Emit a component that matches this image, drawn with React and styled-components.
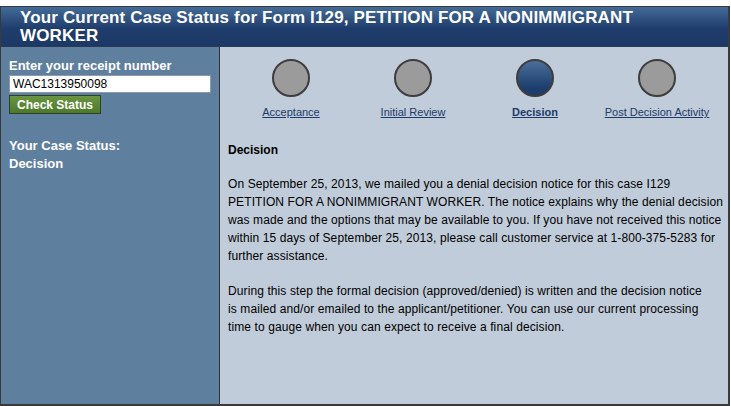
import React from 'react';
import styled, { createGlobalStyle } from 'styled-components';

const GlobalStyle = createGlobalStyle`
  body {
    margin: 0;
    background: #fff;
    font-family: "Liberation Sans", Arial, sans-serif;
  }
`;

const Frame = styled.div`
  margin-top: 6px;
  width: 730px;
  height: 400px;
  box-sizing: border-box;
  border: 1px solid #3a3a3a;
  border-right-width: 2px;
  border-bottom-width: 2px;
  display: flex;
  flex-direction: column;
`;

const Header = styled.h1`
  margin: 0;
  height: 40px;
  box-sizing: border-box;
  padding: 2px 50px 0 19px;
  background: linear-gradient(#436b97, #1f3d6c 55%, #1c3866);
  color: #fff;
  font-size: 17px;
  line-height: 18px;
  font-weight: bold;
  letter-spacing: 0.15px;
  border-bottom: 1px solid #2a3a55;
`;

const Body = styled.div`
  flex: 1;
  display: flex;
`;

const Sidebar = styled.div`
  width: 219px;
  background: #5f7f9e;
  border-right: 1px solid #333;
  padding: 11px 0 0 8px;
  box-sizing: border-box;
  color: #fff;
  font-weight: bold;
  font-size: 13px;
`;

const Label = styled.div`
  line-height: 16px;
`;

const ReceiptInput = styled.input`
  display: block;
  width: 202px;
  height: 18px;
  box-sizing: border-box;
  margin-top: 1px;
  border: 1px solid #8a9bb0;
  padding: 0 3px;
  font-family: "Liberation Sans", Arial, sans-serif;
  font-size: 12px;
  color: #000;
  outline: none;
`;

const CheckButton = styled.button`
  display: block;
  margin-top: 2px;
  height: 19px;
  width: 92px;
  padding: 0;
  box-sizing: border-box;
  border: 1px solid #2f3f2a;
  background: linear-gradient(#6a9440, #4c7a2b);
  color: #fff;
  font-family: "Liberation Sans", Arial, sans-serif;
  font-weight: bold;
  font-size: 12px;
  cursor: pointer;
`;

const StatusText = styled.div`
  margin-top: 23px;
  line-height: 18px;
`;

const Main = styled.div`
  flex: 1;
  background: #c0ccd9;
  padding: 0 4px 0 8px;
  font-size: 12px;
  color: #000;
`;

const Steps = styled.div`
  display: grid;
  grid-template-columns: repeat(4, 122px);
  padding: 12px 0 0 2px;
`;

const Step = styled.div`
  display: flex;
  flex-direction: column;
  align-items: center;
`;

const Dot = styled.div`
  width: 38px;
  height: 38px;
  box-sizing: border-box;
  border-radius: 50%;
  border: 2px solid #3d3d3d;
  background: ${(p) =>
    p.$active ? 'linear-gradient(#4a6e99, #1d3d6d 80%)' : '#9b9b9b'};
`;

const StepLink = styled.a`
  margin-top: 9px;
  font-size: 11px;
  color: #1d3b6a;
  text-decoration: underline;
  font-weight: ${(p) => (p.$active ? 'bold' : 'normal')};
`;

const Heading = styled.div`
  font-weight: bold;
  margin-top: 24px;
  line-height: 16px;
`;

const Para = styled.p`
  margin: 17px 0 0;
  line-height: 18px;
  letter-spacing: 0.1px;
  white-space: nowrap;
`;

const steps = ['Acceptance', 'Initial Review', 'Decision', 'Post Decision Activity'];

export default function App() {
  return (
    <>
      <GlobalStyle />
      <Frame>
        <Header>
          Your Current Case Status for Form I129, PETITION FOR A NONIMMIGRANT WORKER
        </Header>
        <Body>
          <Sidebar>
            <Label>Enter your receipt number</Label>
            <ReceiptInput defaultValue="WAC1313950098" />
            <CheckButton>Check Status</CheckButton>
            <StatusText>
              Your Case Status:
              <br />
              Decision
            </StatusText>
          </Sidebar>
          <Main>
            <Steps>
              {steps.map((s) => (
                <Step key={s}>
                  <Dot $active={s === 'Decision'} />
                  <StepLink href="#" $active={s === 'Decision'}>
                    {s}
                  </StepLink>
                </Step>
              ))}
            </Steps>
            <Heading>Decision</Heading>
            <Para>
              On September 25, 2013, we mailed you a denial decision notice for this case I129
              <br />
              PETITION FOR A NONIMMIGRANT WORKER. The notice explains why the denial decision
              <br />
              was made and the options that may be available to you. If you have not received this notice
              <br />
              within 15 days of September 25, 2013, please call customer service at 1-800-375-5283 for
              <br />
              further assistance.
            </Para>
            <Para>
              During this step the formal decision (approved/denied) is written and the decision notice
              <br />
              is mailed and/or emailed to the applicant/petitioner. You can use our current processing
              <br />
              time to gauge when you can expect to receive a final decision.
            </Para>
          </Main>
        </Body>
      </Frame>
    </>
  );
}
